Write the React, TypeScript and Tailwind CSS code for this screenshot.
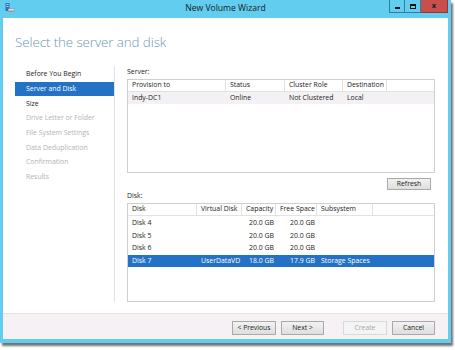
import React from "react";

// Wizard steps shown in the left navigation
const steps = [
    { name: "Before You Begin", state: "done" },
    { name: "Server and Disk", state: "active" },
    { name: "Size", state: "done" },
    { name: "Drive Letter or Folder", state: "off" },
    { name: "File System Settings", state: "off" },
    { name: "Data Deduplication", state: "off" },
    { name: "Confirmation", state: "off" },
    { name: "Results", state: "off" },
];

const disks = [
    { disk: "Disk 4", vd: "", cap: "20.0 GB", free: "20.0 GB", sub: "" },
    { disk: "Disk 5", vd: "", cap: "20.0 GB", free: "20.0 GB", sub: "" },
    { disk: "Disk 6", vd: "", cap: "20.0 GB", free: "20.0 GB", sub: "" },
    { disk: "Disk 7", vd: "UserDataVD", cap: "18.0 GB", free: "17.9 GB", sub: "Storage Spaces", selected: true },
];

const HeadCell: React.FC<{ children?: React.ReactNode; last?: boolean }> = ({ children, last }) => (
    <div className={`h-full pl-[4px] flex items-center whitespace-nowrap overflow-hidden ${last ? "" : "border-r border-[#e2e2e2]"}`}>
        {children}
    </div>
);

const Button: React.FC<{ label: string; width: string; height?: string; disabled?: boolean }> = ({ label, width, height = "h-[14px]", disabled }) => (
    <div
        className={`${width} ${height} flex items-center justify-center border text-[6.8px] ${
            disabled
                ? "border-[#d9d9d9] bg-[#f4f4f4] text-[#a8a8a8]"
                : "border-[#a9a9a9] bg-gradient-to-b from-[#f2f2f2] to-[#dedede] text-[#222]"
        }`}
    >
        {label}
    </div>
);

const WindowIcon = () => (
    <svg width="10" height="10" viewBox="0 0 10 10">
        <rect x="0.5" y="0" width="4" height="8" fill="#2f6fbf" />
        <rect x="1.3" y="1" width="2.4" height="0.8" fill="#cfe3f8" />
        <rect x="1.3" y="3" width="2.4" height="0.8" fill="#cfe3f8" />
        <rect x="3" y="5.5" width="6.5" height="3.5" rx="1" fill="#9a9a9a" />
        <rect x="3.5" y="6" width="5.5" height="1.6" rx="0.6" fill="#dcdcdc" />
    </svg>
);

const App: React.FC = () => {
    return (
        <div className="w-[455px] h-[350px] bg-white font-['Segoe_UI','Open_Sans',sans-serif]">
            <div className="w-[451px] h-[343px] bg-[#62cdef] flex flex-col shadow-[2px_3px_2px_rgba(0,0,0,0.55)]">
                {/* Title bar */}
                <div className="h-[18px] flex items-start relative">
                    <div className="pl-[5px] pt-[3px]">
                        <WindowIcon />
                    </div>
                    <div className="absolute left-0 right-0 top-[2px] text-center text-[8.6px] text-[#1b1b1b]">
                        New Volume Wizard
                    </div>
                    <div className="ml-auto mr-[3px] flex h-[13px] relative">
                        <div className="w-[16px] h-full border border-[#2f7ea0] border-t-0 flex items-end justify-center pb-[3px]">
                            <div className="w-[5px] h-[2px] bg-[#111]" />
                        </div>
                        <div className="w-[16px] h-full border border-[#2f7ea0] border-t-0 border-l-0 flex items-center justify-center">
                            <div className="w-[6px] h-[5px] border border-[#111] border-t-2" />
                        </div>
                        <div className="w-[27px] h-full bg-[#c7504b] border border-[#8b3a36] border-t-0 border-l-0 flex items-center justify-center text-[7.5px] font-bold text-[#1a1a1a] leading-none">
                            x
                        </div>
                    </div>
                </div>

                {/* Client area */}
                <div className="mx-[3px] flex-1 bg-white flex flex-col">
                    {/* Heading */}
                    <div className="h-[48px] pl-[12px] pt-[15px]">
                        <h1 className="text-[13.4px] leading-[18px] font-light text-[#6c98b4] tracking-[-0.1px]">
                            Select the server and disk
                        </h1>
                    </div>

                    <div className="flex-1 flex pb-[11px]">
                        {/* Steps */}
                        <div className="w-[112px] pt-[1px] pl-[12px] border-r border-[#e1e1e1]">
                            {steps.map((step) => (
                                <div
                                    key={step.name}
                                    className={`h-[14.7px] pl-[11px] flex items-center text-[6.9px] whitespace-nowrap ${
                                        step.state === "active"
                                            ? "bg-[#2472c5] text-white"
                                            : step.state === "done"
                                            ? "text-[#222]"
                                            : "text-[#b3b3b3]"
                                    }`}
                                >
                                    {step.name}
                                </div>
                            ))}
                        </div>

                        {/* Server and disk selection */}
                        <div className="flex-1 pl-[12px] pr-[13px] flex flex-col text-[6.9px] text-[#222]">
                            <div className="h-[11px] leading-[11px]">Server:</div>
                            <div className="mt-[2px] h-[94px] border border-[#cfcfcf]">
                                <div className="grid grid-cols-[98px_59px_58px_44px_1fr] h-[12px] border-b border-[#e2e2e2]">
                                    <HeadCell>Provision to</HeadCell>
                                    <HeadCell>Status</HeadCell>
                                    <HeadCell>Cluster Role</HeadCell>
                                    <HeadCell>Destination</HeadCell>
                                    <HeadCell last />
                                </div>
                                <div className="grid grid-cols-[98px_59px_58px_44px_1fr] h-[12px] bg-[#f4f1f5] items-center">
                                    <div className="pl-[4px]">Indy-DC1</div>
                                    <div className="pl-[4px]">Online</div>
                                    <div className="pl-[4px]">Not Clustered</div>
                                    <div className="pl-[4px]">Local</div>
                                    <div />
                                </div>
                            </div>

                            <div className="mt-[5px] self-end mr-[4px]">
                                <Button label="Refresh" width="w-[44px]" height="h-[12px]" />
                            </div>

                            <div className="mt-[0px] h-[12px] leading-[12px]">Disk:</div>
                            <div className="mt-[1px] flex-1 border border-[#cfcfcf]">
                                <div className="grid grid-cols-[69px_45px_34px_41px_56px_1fr] h-[12px] border-b border-[#e2e2e2]">
                                    <HeadCell>Disk</HeadCell>
                                    <HeadCell>Virtual Disk</HeadCell>
                                    <HeadCell>Capacity</HeadCell>
                                    <HeadCell>Free Space</HeadCell>
                                    <HeadCell>Subsystem</HeadCell>
                                    <HeadCell last />
                                </div>
                                <div className="pt-[1px]">
                                    {disks.map((d) => (
                                        <div
                                            key={d.disk}
                                            className={`grid grid-cols-[69px_45px_34px_41px_56px_1fr] h-[12.6px] items-center whitespace-nowrap ${
                                                d.selected ? "bg-[#2472c5] text-white" : ""
                                            }`}
                                        >
                                            <div className="pl-[4px]">{d.disk}</div>
                                            <div className="pl-[4px]">{d.vd}</div>
                                            <div className="pr-[2px] text-right">{d.cap}</div>
                                            <div className="pr-[2px] text-right">{d.free}</div>
                                            <div className="pl-[4px]">{d.sub}</div>
                                            <div />
                                        </div>
                                    ))}
                                </div>
                            </div>
                        </div>
                    </div>

                    {/* Footer buttons */}
                    <div className="h-[26px] bg-[#f5f1f4] border-t border-[#e4e2e4] flex items-start pt-[7px] pr-[13px] justify-end">
                        <Button label="< Previous" width="w-[44px]" />
                        <div className="ml-[5px]">
                            <Button label="Next >" width="w-[43px]" />
                        </div>
                        <div className="ml-[19px]">
                            <Button label="Create" width="w-[44px]" disabled />
                        </div>
                        <div className="ml-[5px]">
                            <Button label="Cancel" width="w-[43px]" />
                        </div>
                    </div>
                </div>
                <div className="h-[4px]" />
            </div>
        </div>
    );
};

export default App;
